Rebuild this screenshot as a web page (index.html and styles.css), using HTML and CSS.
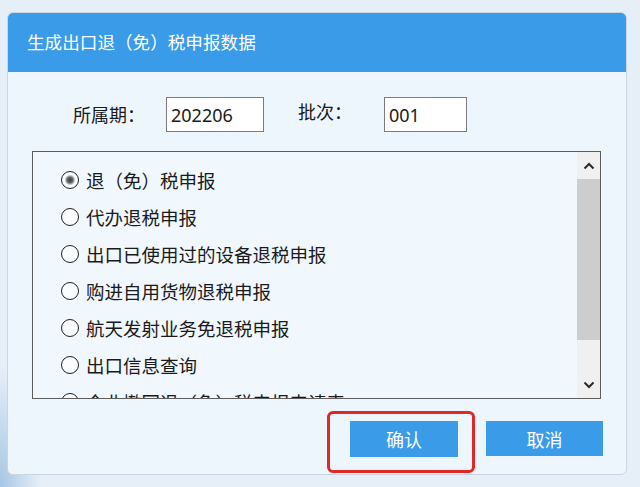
FILE: index.html
```html
<!DOCTYPE html>
<html lang="zh-CN">
<head>
<meta charset="UTF-8" />
<meta name="viewport" content="width=device-width, initial-scale=1" />
<title>生成出口退（免）税申报数据</title>
<link rel="stylesheet" href="styles.css">
</head>
<body>
<div class="dialog">
  <div class="dialog-header">生成出口退（免）税申报数据</div>

  <div class="period-row">
    <label class="field-label" for="period">所属期：</label>
    <input class="field-input period" id="period" type="text" value="202206" />
    <label class="field-label batch-label" for="batch">批次：</label>
    <input class="field-input batch" id="batch" type="text" value="001" />
  </div>

  <div class="option-box">
    <ul class="option-list">
      <li class="option checked"><span class="radio"></span>退（免）税申报</li>
      <li class="option"><span class="radio"></span>代办退税申报</li>
      <li class="option"><span class="radio"></span>出口已使用过的设备退税申报</li>
      <li class="option"><span class="radio"></span>购进自用货物退税申报</li>
      <li class="option"><span class="radio"></span>航天发射业务免退税申报</li>
      <li class="option"><span class="radio"></span>出口信息查询</li>
      <li class="option"><span class="radio"></span>企业撤回退（免）税申报申请表</li>
    </ul>
    <div class="scrollbar">
      <div class="scroll-btn">
        <svg width="12" height="8" viewBox="0 0 12 8"><polyline points="1.5,6.5 6,2 10.5,6.5" fill="none" stroke="#2b2b2b" stroke-width="2"/></svg>
      </div>
      <div class="scroll-track"><div class="scroll-thumb"></div></div>
      <div class="scroll-btn">
        <svg width="12" height="8" viewBox="0 0 12 8"><polyline points="1.5,1.5 6,6 10.5,1.5" fill="none" stroke="#2b2b2b" stroke-width="2"/></svg>
      </div>
    </div>
  </div>

  <div class="actions">
    <span class="highlight"><button class="btn confirm">确认</button></span>
    <button class="btn cancel">取消</button>
  </div>
</div>
</body>
</html>
```

FILE: styles.css
```css
body {
  margin: 0;
  width: 640px;
  height: 487px;
  overflow: hidden;
  font-family: "Noto Sans", "Noto Sans CJK SC", sans-serif;
  color: #1a1a1a;
  background: radial-gradient(ellipse 40px 120px at 0% 100%, #a6c6e4 0, rgba(166, 198, 228, 0) 100%), #e6eef7;
}
.dialog {
  box-sizing: border-box;
  width: 620px;
  height: 463px;
  margin: 12px 0 0 7px;
  background: #eef6fd;
  border: 1px solid #c8d5e2;
  border-radius: 6px;
}
.dialog-header {
  height: 59px;
  line-height: 59px;
  padding-left: 19px;
  background: #3a9be8;
  border-radius: 5px 5px 0 0;
  color: #fff;
  font-size: 17.6px;
}
.period-row {
  display: flex;
  align-items: center;
  height: 35px;
  margin-top: 25px;
  padding-left: 65px;
}
.field-label {
  font-size: 18px;
  line-height: 24px;
}
.batch-label {
  margin-left: 34px;
  margin-bottom: 5px;
}
.field-input {
  box-sizing: border-box;
  height: 35px;
  padding: 0 4px;
  border: 1px solid #7b7b7b;
  background: #fff;
  font-family: "Noto Sans", sans-serif;
  font-size: 18px;
  color: #1a1a1a;
  outline: none;
}
.period {
  width: 98px;
  margin-left: 21px;
}
.batch {
  width: 83px;
  margin-left: 32px;
}
.option-box {
  box-sizing: border-box;
  display: flex;
  width: 569px;
  height: 248px;
  margin: 19px 0 0 24px;
  border: 1px solid #5c5c5c;
  background: #f0f7fd;
  overflow: hidden;
}
.option-list {
  flex: 1;
  margin: 0;
  padding: 9px 0 0 28px;
  list-style: none;
}
.option {
  display: flex;
  align-items: center;
  height: 37px;
  font-size: 18.5px;
  white-space: nowrap;
}
.radio {
  box-sizing: border-box;
  width: 18px;
  height: 18px;
  margin-right: 7px;
  border: 1.5px solid #202020;
  border-radius: 50%;
  background: #fafcfe;
  flex-shrink: 0;
}
.checked .radio {
  background: radial-gradient(circle, #3c3c3c 0, #6a6a6a 3px, #c8c8c8 4.5px, #fafcfe 5.5px);
}
.scrollbar {
  display: flex;
  flex-direction: column;
  width: 23px;
  background: #f0f0f0;
}
.scroll-btn {
  display: flex;
  align-items: center;
  justify-content: center;
  height: 27px;
}
.scroll-track {
  flex: 1;
}
.scroll-thumb {
  height: 161px;
  background: #cdcdcd;
}
.actions {
  display: flex;
  justify-content: flex-end;
  gap: 28px;
  margin-top: 22px;
  padding-right: 23px;
}
.highlight {
  position: relative;
  display: flex;
}
.highlight::after {
  content: "";
  position: absolute;
  top: -10px;
  left: -23px;
  right: -17px;
  bottom: -16px;
  border: 3px solid #e32626;
  border-radius: 6px;
}
.btn {
  height: 35px;
  border: none;
  background: #3a9be8;
  color: #fff;
  font-family: "Noto Sans CJK SC", sans-serif;
  font-size: 18px;
  cursor: pointer;
}
.confirm {
  width: 108px;
  height: 36px;
}
.cancel {
  width: 117px;
}
```
